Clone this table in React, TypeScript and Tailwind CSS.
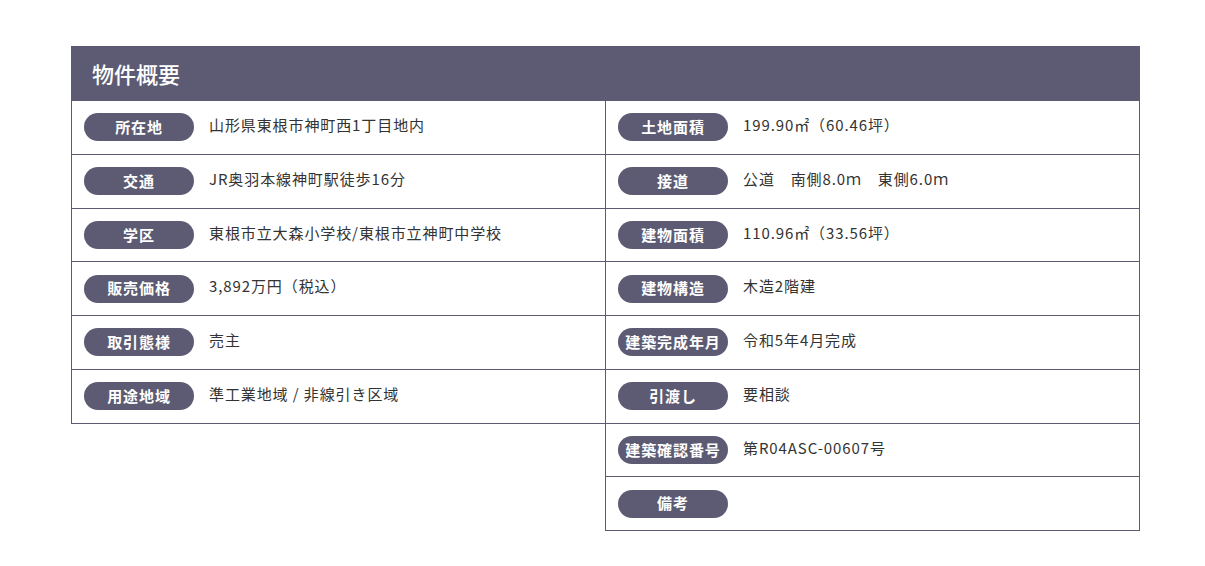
import React from "react";

type Item = { label: string; value: string };

const left: Item[] = [
  { label: "所在地", value: "山形県東根市神町西1丁目地内" },
  { label: "交通", value: "JR奥羽本線神町駅徒歩16分" },
  { label: "学区", value: "東根市立大森小学校/東根市立神町中学校" },
  { label: "販売価格", value: "3,892万円（税込）" },
  { label: "取引態様", value: "売主" },
  { label: "用途地域", value: "準工業地域 / 非線引き区域" },
];

const right: Item[] = [
  { label: "土地面積", value: "199.90㎡（60.46坪）" },
  { label: "接道", value: "公道　南側8.0ｍ　東側6.0ｍ" },
  { label: "建物面積", value: "110.96㎡（33.56坪）" },
  { label: "建物構造", value: "木造2階建" },
  { label: "建築完成年月", value: "令和5年4月完成" },
  { label: "引渡し", value: "要相談" },
  { label: "建築確認番号", value: "第R04ASC-00607号" },
  { label: "備考", value: "" },
];

function Row({ label, value }: Item) {
  return (
    <div className="flex h-[53.75px] items-center border-b border-[#5c5b73] pl-[12px]">
      <span className="flex h-[28px] w-[110px] shrink-0 items-center justify-center whitespace-nowrap rounded-full bg-[#5c5b73] text-[15px] font-bold tracking-[0.06em] text-white">
        {label}
      </span>
      <span className="ml-[15px] pb-[4px] text-[15px] tracking-[0.06em] text-[#333]">
        {value}
      </span>
    </div>
  );
}

export default function App() {
  return (
    <div
      className="min-h-[566px] bg-white pt-[46px]"
      style={{ fontFamily: '"Noto Sans CJK JP", "Noto Sans", sans-serif' }}
    >
      <div className="ml-[71px] w-[1069px]">
        <div className="flex h-[55px] items-center bg-[#5c5b73] pl-[21px] text-[22px] font-medium text-white">
          物件概要
        </div>
        <div className="grid grid-cols-[534px_535px] items-start">
          <div className="border-l border-[#5c5b73]">
            {left.map((it) => (
              <Row key={it.label} {...it} />
            ))}
          </div>
          <div className="border-x border-[#5c5b73]">
            {right.map((it) => (
              <Row key={it.label} {...it} />
            ))}
          </div>
        </div>
      </div>
    </div>
  );
}
